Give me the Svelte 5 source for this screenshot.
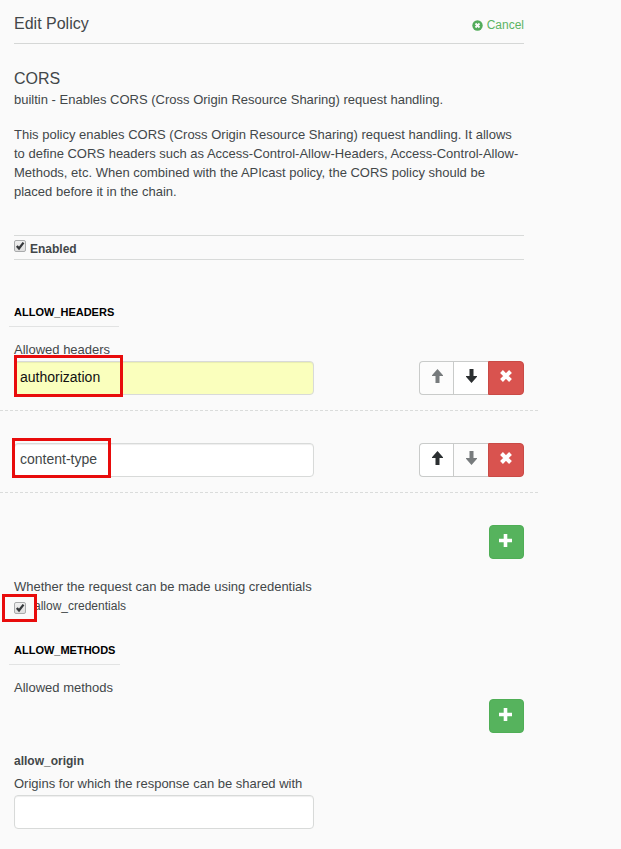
<script>
  const headers = [
    { value: 'authorization', filled: true, up: false, down: true },
    { value: 'content-type', filled: false, up: true, down: false }
  ];
</script>

{#snippet check()}
  <span class="check">
    <svg width="12" height="12" viewBox="0 0 12 12"><path d="M2.8 6 5 8.4 9.5 2.6" fill="none" stroke="#35383b" stroke-width="2.3" /></svg>
  </span>
{/snippet}

{#snippet arrow(down)}
  <svg class:down width="13" height="14" viewBox="0 0 13 14"><path d="M6.5 0 12 6.2V7H8.5V14H4.5V7H1V6.2Z" fill="currentColor" /></svg>
{/snippet}

{#snippet plus()}
  <button class="add" aria-label="Add">
    <svg width="13" height="13" viewBox="0 0 13 13"><path d="M4.7 0H8.3V4.7H13V8.3H8.3V13H4.7V8.3H0V4.7H4.7Z" fill="#fff" /></svg>
  </button>
{/snippet}

<main>
  <header>
    <h1>Edit Policy</h1>
    <button class="cancel">
      <svg width="11" height="11" viewBox="0 0 11 11"><circle cx="5.5" cy="5.5" r="5.2" fill="#52ac5a" /><path d="M3.5 3.5 7.5 7.5M7.5 3.5 3.5 7.5" stroke="#fafafa" stroke-width="1.9" /></svg>
      <span>Cancel</span>
    </button>
  </header>

  <section class="intro">
    <h2>CORS</h2>
    <p>builtin - Enables CORS (Cross Origin Resource Sharing) request handling.</p>
    <p class="description">This policy enables CORS (Cross Origin Resource Sharing) request handling. It allows to define CORS headers such as Access-Control-Allow-Headers, Access-Control-Allow-Methods, etc. When combined with the APIcast policy, the CORS policy should be placed before it in the chain.</p>
  </section>

  <div class="enabled">{@render check()}<b>Enabled</b></div>

  <h3 class="first">ALLOW_HEADERS</h3>
  <p class="label">Allowed headers</p>
  {#each headers as h, i}
    <div class="row" class:second={i === 1}>
      <div class="field" class:filled={h.filled}>{h.value}<i class="mark m{i}"></i></div>
      <div class="group">
        <button aria-label="Move up" disabled={!h.up}>{@render arrow(false)}</button>
        <button aria-label="Move down" disabled={!h.down}>{@render arrow(true)}</button>
        <button class="remove" aria-label="Remove">
          <svg width="12" height="12" viewBox="0 0 12 12"><path d="M1.5 1.5 10.5 10.5M10.5 1.5 1.5 10.5" stroke="#fff" stroke-width="4" /></svg>
        </button>
      </div>
    </div>
  {/each}
  <div class="adder a1">{@render plus()}</div>

  <p class="label">Whether the request can be made using credentials</p>
  <div class="credentials">{@render check()}<span>allow_credentials</span><i class="mark m2"></i></div>

  <h3 class="methods">ALLOW_METHODS</h3>
  <p class="label">Allowed methods</p>
  <div class="adder">{@render plus()}</div>

  <h4>allow_origin</h4>
  <p class="label">Origins for which the response can be shared with</p>
  <div class="field"></div>
</main>

<style>
  :global(body) { background: #fafafa; }
  main {
    box-sizing: border-box;
    width: 538px;
    height: 849px;
    padding: 0 14px;
    background: #fafafa;
    color: #424749;
    font: 13px/19px "Liberation Sans", Arial, sans-serif;
  }
  h1, h2, h3, h4, p { margin: 0; }
  button { padding: 0; font: inherit; cursor: pointer; }
  svg { display: block; }
  header {
    display: flex;
    justify-content: space-between;
    box-sizing: border-box;
    height: 44px;
    padding-top: 13px;
    border-bottom: 1px solid #d5d7d6;
  }
  h1, h2 { font-size: 16px; line-height: 21px; font-weight: 400; }
  .cancel {
    display: flex;
    align-items: center;
    gap: 4px;
    height: 24px;
    border: 0;
    background: none;
    color: #5cb464;
    font-size: 12px;
  }
  .cancel span { line-height: 20px; }
  .intro { height: 191px; }
  h2 { padding-top: 24px; }
  .intro p { padding-top: 1px; }
  .intro .description { padding-top: 16px; }
  .enabled {
    display: flex;
    box-sizing: border-box;
    height: 25px;
    padding-top: 4px;
    gap: 4px;
    border: solid #d8dad9;
    border-width: 1px 0;
    font-size: 12px;
    line-height: 18px;
  }
  .check {
    display: block;
    box-sizing: border-box;
    width: 12px;
    height: 12px;
    border: 1px solid #a9abac;
    border-radius: 2px;
    background: linear-gradient(#f0f0f0, #dedede);
  }
  .check svg { margin: -1px; }
  h3 {
    box-sizing: border-box;
    width: max-content;
    height: 22px;
    margin-left: -5px;
    padding: 0 5px;
    border-bottom: 1px solid #e2e3e3;
    color: #000;
    font-size: 11px;
    line-height: 15px;
  }
  .first { margin-top: 45px; }
  .label { margin-top: 13px; height: 21px; }
  .row {
    display: flex;
    justify-content: space-between;
    height: 50px;
    margin: 0 -15px 0 -14px;
    padding: 0 15px 0 14px;
    background: repeating-linear-gradient(90deg, #dadcdb 0 3px, transparent 3px 5px) bottom / 100% 1px no-repeat;
  }
  .second { padding-top: 32px; }
  .field {
    position: relative;
    box-sizing: border-box;
    width: 300px;
    height: 34px;
    padding: 0 5px;
    border: 1px solid #d8dad9;
    border-radius: 4px;
    background: #fff;
    box-shadow: inset 0 1px 1px rgba(0, 0, 0, .07);
    font-size: 14px;
    line-height: 31px;
  }
  .filled { background: #faffbd; color: #111; }
  .mark {
    position: absolute;
    box-sizing: border-box;
    border: 3px solid #e80c0c;
    pointer-events: none;
  }
  .m0 { left: -1px; top: -7px; width: 109px; height: 42px; }
  .m1 { left: -3px; top: -6px; width: 99px; height: 40px; }
  .m2 { left: -12px; top: -3px; width: 35px; height: 28px; }
  .group { display: flex; height: 34px; }
  .group button {
    display: flex;
    align-items: center;
    justify-content: center;
    box-sizing: border-box;
    width: 35px;
    height: 34px;
    padding: 0 0 4px;
    border: 1px solid #c9cbca;
    border-right-width: 0;
    background: #fff;
    color: #2b2f31;
  }
  .group button:first-child { width: 34px; padding-left: 2px; border-radius: 4px 0 0 4px; }
  .group button:disabled { background: #fcfcfc; color: #777b7d; }
  .group .remove {
    width: 36px;
    border: 1px solid #c94a46;
    border-radius: 0 4px 4px 0;
    background: #d9534f;
  }
  .down { transform: scaleY(-1); }
  .adder { display: flex; justify-content: flex-end; height: 34px; }
  .a1 { margin: 32px 0 18px; }
  .add {
    display: flex;
    align-items: center;
    justify-content: center;
    width: 35px;
    height: 34px;
    padding: 0 2px 3px 0;
    border: 1px solid #4fae56;
    border-radius: 4px;
    background: #56b35d;
  }
  .credentials {
    position: relative;
    display: flex;
    gap: 8px;
    margin-top: -1px;
    height: 46px;
    font-size: 12px;
  }
  .credentials .check { margin-top: 5px; }
  h4 { margin-top: 19px; font-size: 12px; line-height: 18px; }
  h4 + .label { margin-top: 4px; }
</style>
